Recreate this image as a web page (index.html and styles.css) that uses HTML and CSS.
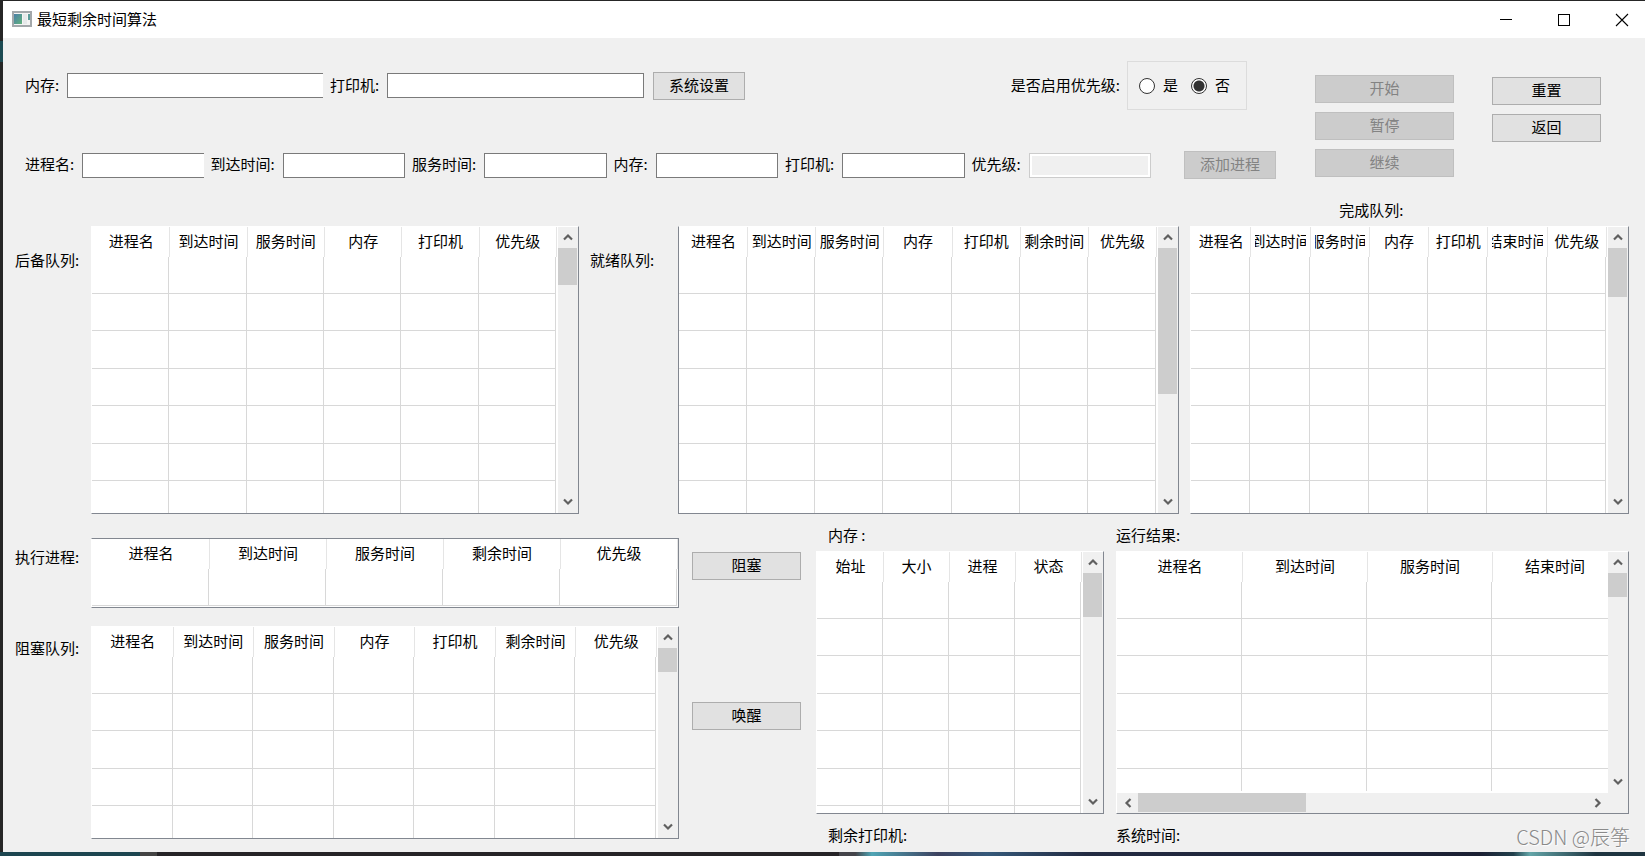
FILE: index.html
```html
<!DOCTYPE html>
<html lang="zh-CN">
<head>
<meta charset="utf-8">
<title>最短剩余时间算法</title>
<link rel="stylesheet" href="styles.css">
</head>
<body>
<svg class="defs" aria-hidden="true">
  <symbol id="up" viewBox="0 0 10 8"><path d="M1 6.5 5 2.5 9 6.5" fill="none" stroke="#606060" stroke-width="2.2"/></symbol>
  <symbol id="down" viewBox="0 0 10 8"><path d="M1 1.5 5 5.5 9 1.5" fill="none" stroke="#606060" stroke-width="2.2"/></symbol>
  <symbol id="left" viewBox="0 0 8 10"><path d="M6.5 1 2.5 5 6.5 9" fill="none" stroke="#606060" stroke-width="2.2"/></symbol>
  <symbol id="right" viewBox="0 0 8 10"><path d="M1.5 1 5.5 5 1.5 9" fill="none" stroke="#606060" stroke-width="2.2"/></symbol>
</svg>
<div class="window">
  <header class="titlebar">
    <svg class="app-icon" width="20" height="17" viewBox="0 0 20 17" aria-hidden="true">
      <defs><linearGradient id="ig" x1="0" y1="0" x2="1" y2="1"><stop offset="0" stop-color="#4a7fa8"/><stop offset="1" stop-color="#62b27c"/></linearGradient></defs>
      <rect x="1" y="1" width="18" height="14" fill="#f4f4f4" stroke="#a3a8ab" stroke-width="2"/>
      <rect x="2" y="3" width="8" height="10" fill="url(#ig)"/>
      <rect x="11" y="3" width="4" height="10" fill="#e6e9ea"/>
      <rect x="16" y="3" width="2" height="6" fill="#5c9c9a"/>
    </svg>
    <h1 class="title">最短剩余时间算法</h1>
    <div class="controls">
      <button class="control" aria-label="最小化"><svg width="14" height="14"><path d="M1 6.5H13" stroke="#000"/></svg></button>
      <button class="control" aria-label="最大化"><svg width="14" height="14"><rect x="1.5" y="1.5" width="11" height="11" fill="none" stroke="#000"/></svg></button>
      <button class="control" aria-label="关闭"><svg width="14" height="14"><path d="M1 1 13 13M13 1 1 13" stroke="#000" stroke-width="1.1"/></svg></button>
    </div>
  </header>
  <main class="content">
    <section class="settings">
      <div class="forms">
        <div class="form-row">
          <form class="fields system">
            <label for="mem">内存:</label><input class="box cut" id="mem" type="text">
            <label for="printer">打印机:</label><input class="box" id="printer" type="text">
            <button class="btn short" type="button">系统设置</button>
          </form>
          <div class="priority">
            <span id="prio-label">是否启用优先级:</span>
            <div class="radios" role="radiogroup" aria-labelledby="prio-label">
              <input class="radio" type="radio" name="prio" id="yes"><label for="yes">是</label>
              <input class="radio" type="radio" name="prio" id="no" checked><label for="no">否</label>
            </div>
          </div>
        </div>
        <form class="fields">
          <label for="p-name">进程名:</label><input class="box cut" id="p-name" type="text">
          <label for="p-arrive">到达时间:</label><input class="box" id="p-arrive" type="text">
          <label for="p-serve">服务时间:</label><input class="box" id="p-serve" type="text">
          <label for="p-mem">内存:</label><input class="box" id="p-mem" type="text">
          <label for="p-printer">打印机:</label><input class="box" id="p-printer" type="text">
          <label for="p-prio">优先级:</label><input class="box" id="p-prio" type="text" disabled>
          <button class="btn short add" type="button" disabled>添加进程</button>
        </form>
      </div>
      <div class="actions run">
        <button class="btn" disabled>开始</button>
        <button class="btn" disabled>暂停</button>
        <button class="btn" disabled>继续</button>
      </div>
      <div class="actions nav">
        <button class="btn">重置</button>
        <button class="btn">返回</button>
      </div>
    </section>

    <section class="queues">
      <span class="side-label queue-label">后备队列:</span>
      <div class="panel queue">
        <div class="view"><table class="grid">
          <thead><tr><th><span>进程名</span></th><th><span>到达时间</span></th><th><span>服务时间</span></th><th><span>内存</span></th><th><span>打印机</span></th><th><span>优先级</span></th></tr></thead>
          <tbody>
            <tr><td></td><td></td><td></td><td></td><td></td><td></td></tr>
            <tr><td></td><td></td><td></td><td></td><td></td><td></td></tr>
            <tr><td></td><td></td><td></td><td></td><td></td><td></td></tr>
            <tr><td></td><td></td><td></td><td></td><td></td><td></td></tr>
            <tr><td></td><td></td><td></td><td></td><td></td><td></td></tr>
            <tr><td></td><td></td><td></td><td></td><td></td><td></td></tr>
            <tr><td></td><td></td><td></td><td></td><td></td><td></td></tr>
          </tbody>
        </table></div>
        <div class="vbar"><svg class="arrow"><use href="#up"/></svg><div class="track"><div class="thumb" style="height:15%"></div></div><svg class="arrow"><use href="#down"/></svg></div>
      </div>
      <span class="side-label queue-label ready">就绪队列:</span>
      <div class="panel queue edge">
        <div class="view"><table class="grid">
          <thead><tr><th><span>进程名</span></th><th><span>到达时间</span></th><th><span>服务时间</span></th><th><span>内存</span></th><th><span>打印机</span></th><th><span>剩余时间</span></th><th><span>优先级</span></th></tr></thead>
          <tbody>
            <tr><td></td><td></td><td></td><td></td><td></td><td></td><td></td></tr>
            <tr><td></td><td></td><td></td><td></td><td></td><td></td><td></td></tr>
            <tr><td></td><td></td><td></td><td></td><td></td><td></td><td></td></tr>
            <tr><td></td><td></td><td></td><td></td><td></td><td></td><td></td></tr>
            <tr><td></td><td></td><td></td><td></td><td></td><td></td><td></td></tr>
            <tr><td></td><td></td><td></td><td></td><td></td><td></td><td></td></tr>
            <tr><td></td><td></td><td></td><td></td><td></td><td></td><td></td></tr>
          </tbody>
        </table></div>
        <div class="vbar"><svg class="arrow"><use href="#up"/></svg><div class="track"><div class="thumb" style="height:60%"></div></div><svg class="arrow"><use href="#down"/></svg></div>
      </div>
      <div class="done">
        <span class="done-label">完成队列:</span>
        <div class="panel">
          <div class="view"><table class="grid">
            <thead><tr><th><span>进程名</span></th><th><span>到达时间</span></th><th><span>服务时间</span></th><th><span>内存</span></th><th><span>打印机</span></th><th><span>结束时间</span></th><th><span>优先级</span></th></tr></thead>
            <tbody>
              <tr><td></td><td></td><td></td><td></td><td></td><td></td><td></td></tr>
              <tr><td></td><td></td><td></td><td></td><td></td><td></td><td></td></tr>
              <tr><td></td><td></td><td></td><td></td><td></td><td></td><td></td></tr>
              <tr><td></td><td></td><td></td><td></td><td></td><td></td><td></td></tr>
              <tr><td></td><td></td><td></td><td></td><td></td><td></td><td></td></tr>
              <tr><td></td><td></td><td></td><td></td><td></td><td></td><td></td></tr>
              <tr><td></td><td></td><td></td><td></td><td></td><td></td><td></td></tr>
            </tbody>
          </table></div>
          <div class="vbar"><svg class="arrow"><use href="#up"/></svg><div class="track"><div class="thumb" style="height:20%"></div></div><svg class="arrow"><use href="#down"/></svg></div>
        </div>
      </div>
    </section>

    <section class="lower">
      <div class="active">
        <div class="active-row">
          <span class="side-label exec-label">执行进程:</span>
          <div class="panel closed">
            <div class="view"><table class="grid">
              <thead><tr><th><span>进程名</span></th><th><span>到达时间</span></th><th><span>服务时间</span></th><th><span>剩余时间</span></th><th><span>优先级</span></th></tr></thead>
              <tbody><tr><td></td><td></td><td></td><td></td><td></td></tr></tbody>
            </table></div>
          </div>
        </div>
        <div class="active-row grow">
          <span class="side-label block-label">阻塞队列:</span>
          <div class="panel">
            <div class="view"><table class="grid">
              <thead><tr><th><span>进程名</span></th><th><span>到达时间</span></th><th><span>服务时间</span></th><th><span>内存</span></th><th><span>打印机</span></th><th><span>剩余时间</span></th><th><span>优先级</span></th></tr></thead>
              <tbody>
                <tr><td></td><td></td><td></td><td></td><td></td><td></td><td></td></tr>
                <tr><td></td><td></td><td></td><td></td><td></td><td></td><td></td></tr>
                <tr><td></td><td></td><td></td><td></td><td></td><td></td><td></td></tr>
                <tr><td></td><td></td><td></td><td></td><td></td><td></td><td></td></tr>
                <tr><td></td><td></td><td></td><td></td><td></td><td></td><td></td></tr>
              </tbody>
            </table></div>
            <div class="vbar"><svg class="arrow"><use href="#up"/></svg><div class="track"><div class="thumb" style="height:14%"></div></div><svg class="arrow"><use href="#down"/></svg></div>
          </div>
        </div>
      </div>
      <div class="switches">
        <button class="btn">阻塞</button>
        <button class="btn">唤醒</button>
      </div>
      <div class="report">
        <span class="caption inset">内存 :</span>
        <div class="panel">
          <div class="view"><table class="grid">
            <thead><tr><th><span>始址</span></th><th><span>大小</span></th><th><span>进程</span></th><th><span>状态</span></th></tr></thead>
            <tbody>
              <tr><td></td><td></td><td></td><td></td></tr>
              <tr><td></td><td></td><td></td><td></td></tr>
              <tr><td></td><td></td><td></td><td></td></tr>
              <tr><td></td><td></td><td></td><td></td></tr>
              <tr><td></td><td></td><td></td><td></td></tr>
              <tr><td></td><td></td><td></td><td></td></tr>
              <tr><td></td><td></td><td></td><td></td></tr>
            </tbody>
          </table></div>
          <div class="vbar"><svg class="arrow"><use href="#up"/></svg><div class="track"><div class="thumb" style="height:20%"></div></div><svg class="arrow"><use href="#down"/></svg></div>
        </div>
        <span class="status inset">剩余打印机:</span>
      </div>
      <div class="report">
        <span class="caption">运行结果:</span>
        <div class="panel both">
          <div class="view"><table class="grid wide">
            <thead><tr><th><span>进程名</span></th><th><span>到达时间</span></th><th><span>服务时间</span></th><th><span>结束时间</span></th></tr></thead>
            <tbody>
              <tr><td></td><td></td><td></td><td></td></tr>
              <tr><td></td><td></td><td></td><td></td></tr>
              <tr><td></td><td></td><td></td><td></td></tr>
              <tr><td></td><td></td><td></td><td></td></tr>
              <tr><td></td><td></td><td></td><td></td></tr>
              <tr><td></td><td></td><td></td><td></td></tr>
            </tbody>
          </table></div>
          <div class="vbar"><svg class="arrow"><use href="#up"/></svg><div class="track"><div class="thumb" style="height:12%"></div></div><svg class="arrow"><use href="#down"/></svg></div>
          <div class="hbar"><svg class="arrow"><use href="#left"/></svg><div class="track"><div class="thumb" style="width:37.5%"></div></div><svg class="arrow"><use href="#right"/></svg></div>
          <div class="corner"></div>
        </div>
        <span class="status">系统时间:</span>
      </div>
    </section>
  </main>
  <span class="watermark">CSDN @辰筝</span>
</div>
</body>
</html>
```
FILE: styles.css
```css
* { box-sizing: border-box; }

body {
  margin: 0;
  height: 100vh;
  min-height: 720px;
  padding: 1px 0 4px 3px;
  background:
    linear-gradient(90deg, #1d4650 0 140px, #444 140px 157px, #262427 157px 51%, #44444a 51% 52%, #4fa5b5 53%, #3d4260 57%, #35597a 60%, #232b42 66%, #1b2033 90%, #22404c 92%, #63a5a8 93%, #1e3440 97%) bottom / 100% 4px no-repeat,
    linear-gradient(#1c4a52, #1c4a52) 0 41px / 3px 21px no-repeat,
    #262626;
  font: 15px/22px "Noto Sans CJK SC", sans-serif;
  color: #000;
}

button, input { font: inherit; color: inherit; margin: 0; }

.defs { position: absolute; width: 0; height: 0; }

.window {
  position: relative;
  display: flex;
  flex-direction: column;
  height: 100%;
  background: #f0f0f0;
}

/* Title bar */
.titlebar {
  display: flex;
  align-items: center;
  height: 37px;
  flex: none;
  padding-left: 9px;
  background: #fff;
}
.title { margin: 0 0 0 5px; padding-bottom: 2px; font-size: 15px; font-weight: 400; }
.controls { display: flex; margin-left: auto; margin-right: -6px; }
.control {
  display: grid;
  place-items: center;
  width: 58px;
  height: 36px;
  padding: 0;
  border: 0;
  background: none;
}

.content { flex: 1; display: flex; flex-direction: column; min-height: 0; }

/* Settings */
.settings {
  display: flex;
  flex: none;
  height: 159px;
  padding: 23px 44px 0 22px;
}
.forms { flex: 1; min-width: 0; display: flex; flex-direction: column; gap: 41px; }
.form-row { display: flex; align-items: center; }
.fields { display: flex; align-items: center; white-space: nowrap; }
.fields label { margin-right: 8px; padding-bottom: 2px; }
.system { flex: 720 1 0; min-width: 0; }
.box {
  flex: 1;
  min-width: 0;
  height: 25px;
  margin-right: 7px;
  padding: 0 4px;
  border: 1px solid #7a7a7a;
  border-radius: 0;
  background: #fff;
}
.cut { border-right: 0; }
.box:disabled {
  border-color: #ccc;
  background: #f0f0f0;
  box-shadow: inset 0 0 0 2px #fff;
}
.btn {
  height: 28px;
  padding: 0 0 2px;
  border: 1px solid #adadad;
  background: #e1e1e1;
  line-height: 24px;
}
.btn:disabled { border-color: #bfbfbf; background: #ccc; color: #838383; }
.short { width: 92px; }
.system .short { margin-left: 2px; }
.add { margin-left: 26px; }

.priority {
  display: flex;
  flex: 502 1 0;
  align-items: center;
  justify-content: flex-end;
  gap: 7px;
  padding-right: 29px;
  white-space: nowrap;
}
.priority span, .radios label { padding-bottom: 2px; }
.radios {
  display: flex;
  align-items: center;
  width: 120px;
  height: 49px;
  padding-left: 11px;
  border: 1px solid #dcdcdc;
}
.radio {
  appearance: none;
  width: 16px;
  height: 16px;
  margin-right: 8px;
  border: 1px solid #333;
  border-radius: 50%;
  background: #fff;
}
.radio:checked { background: radial-gradient(circle, #333 0 5px, #fff 6px); }
.radios label { margin-right: 13px; }
.radios label:last-child { margin-right: 0; }

.actions { display: flex; flex: none; flex-direction: column; gap: 9px; }
.run { width: 139px; margin-left: 39px; padding-top: 14px; }
.nav { width: 109px; margin-left: 38px; padding-top: 16px; }

/* Tables */
.panel {
  display: flex;
  flex: 1;
  min-width: 0;
  min-height: 0;
  border: 1px solid #828790;
  border-top-color: #fff;
  border-left-color: #fff;
  background: #fff;
}
.edge { border-left-color: #828790; }
.closed { border-top-color: #828790; }
.view { flex: 1; min-width: 0; overflow: hidden; padding-right: 2px; }
.closed .view { padding-right: 1px; }
.grid { width: 100%; table-layout: fixed; border-collapse: separate; border-spacing: 0; }
.grid th { height: 30px; padding: 0 4px 2px; border-left: 1px solid #e5e5e5; font-weight: 400; }
.grid th:first-child { border-left-color: #fff; }
.grid th:last-child { box-shadow: 1px 0 #e5e5e5; }
.grid th span { display: flex; justify-content: center; overflow: hidden; white-space: nowrap; }
.grid td { height: 37px; padding: 0; border-right: 1px solid #d8d8d8; border-bottom: 1px solid #d8d8d8; }
.grid tr:nth-child(2n+3) td { height: 38px; }
.wide { width: calc(100% + 11px); }

/* Scroll bars */
.vbar { display: flex; flex-direction: column; width: 20px; background: #f0f0f0; }
.hbar { display: flex; height: 20px; background: #f0f0f0; }
.arrow { flex: none; width: 19px; height: 21px; padding: 6px 4px 7px 5px; }
.track { flex: 1; min-width: 0; min-height: 0; }
.thumb { background: #cdcdcd; }
.vbar .thumb { width: 19px; }
.hbar .thumb { height: 19px; }
.hbar .arrow { width: 21px; height: 19px; padding: 5px 6px 4px 7px; }
.both { display: grid; grid-template: minmax(0, 1fr) 20px / minmax(0, 1fr) 20px; }
.both .view { border-bottom: 2px solid #fff; }
.corner { background: #f0f0f0; }

/* Queues */
.queues {
  display: grid;
  flex: 317 1 0;
  min-height: 0;
  grid-template-columns: 76px minmax(0, 488fr) 99px minmax(0, 501fr) 11px minmax(0, 439fr);
  padding: 0 16px 0 12px;
}
.queue { margin-top: 29px; }
.queue-label { padding-top: 52px; }
.ready { padding-left: 11px; }
.side-label { white-space: nowrap; }
.done { grid-column: 6; display: flex; flex-direction: column; min-height: 0; }
.done-label { height: 29px; padding: 2px 0 0 34%; }

/* Lower area */
.lower {
  display: grid;
  flex: 328 1 0;
  min-height: 0;
  grid-template-columns: minmax(0, 664fr) 113px minmax(0, 288fr) minmax(0, 513fr);
  column-gap: 12px;
  padding: 10px 16px 0 12px;
}
.active { display: flex; flex-direction: column; gap: 18px; min-height: 0; padding: 14px 0 13px; }
.active-row { display: grid; grid-template-columns: 76px minmax(0, 1fr); min-height: 0; }
.grow { flex: 1; }
.closed { padding-bottom: 1px; }
.exec-label { padding-top: 8px; }
.block-label { padding-top: 11px; }
.switches { display: flex; flex-direction: column; gap: 122px; padding: 28px 3px 0 1px; }
.report { display: flex; flex-direction: column; min-height: 0; }
.caption { flex: none; height: 27px; }
.status { flex: none; height: 38px; padding-top: 10px; }
.inset { padding-left: 12px; }

.watermark {
  position: absolute;
  right: 15px;
  bottom: 1px;
  font-size: 20px;
  line-height: 28px;
  font-weight: 300;
  color: #8a8a8a;
  text-shadow: 1px 1px 1px #fff;
}
```
